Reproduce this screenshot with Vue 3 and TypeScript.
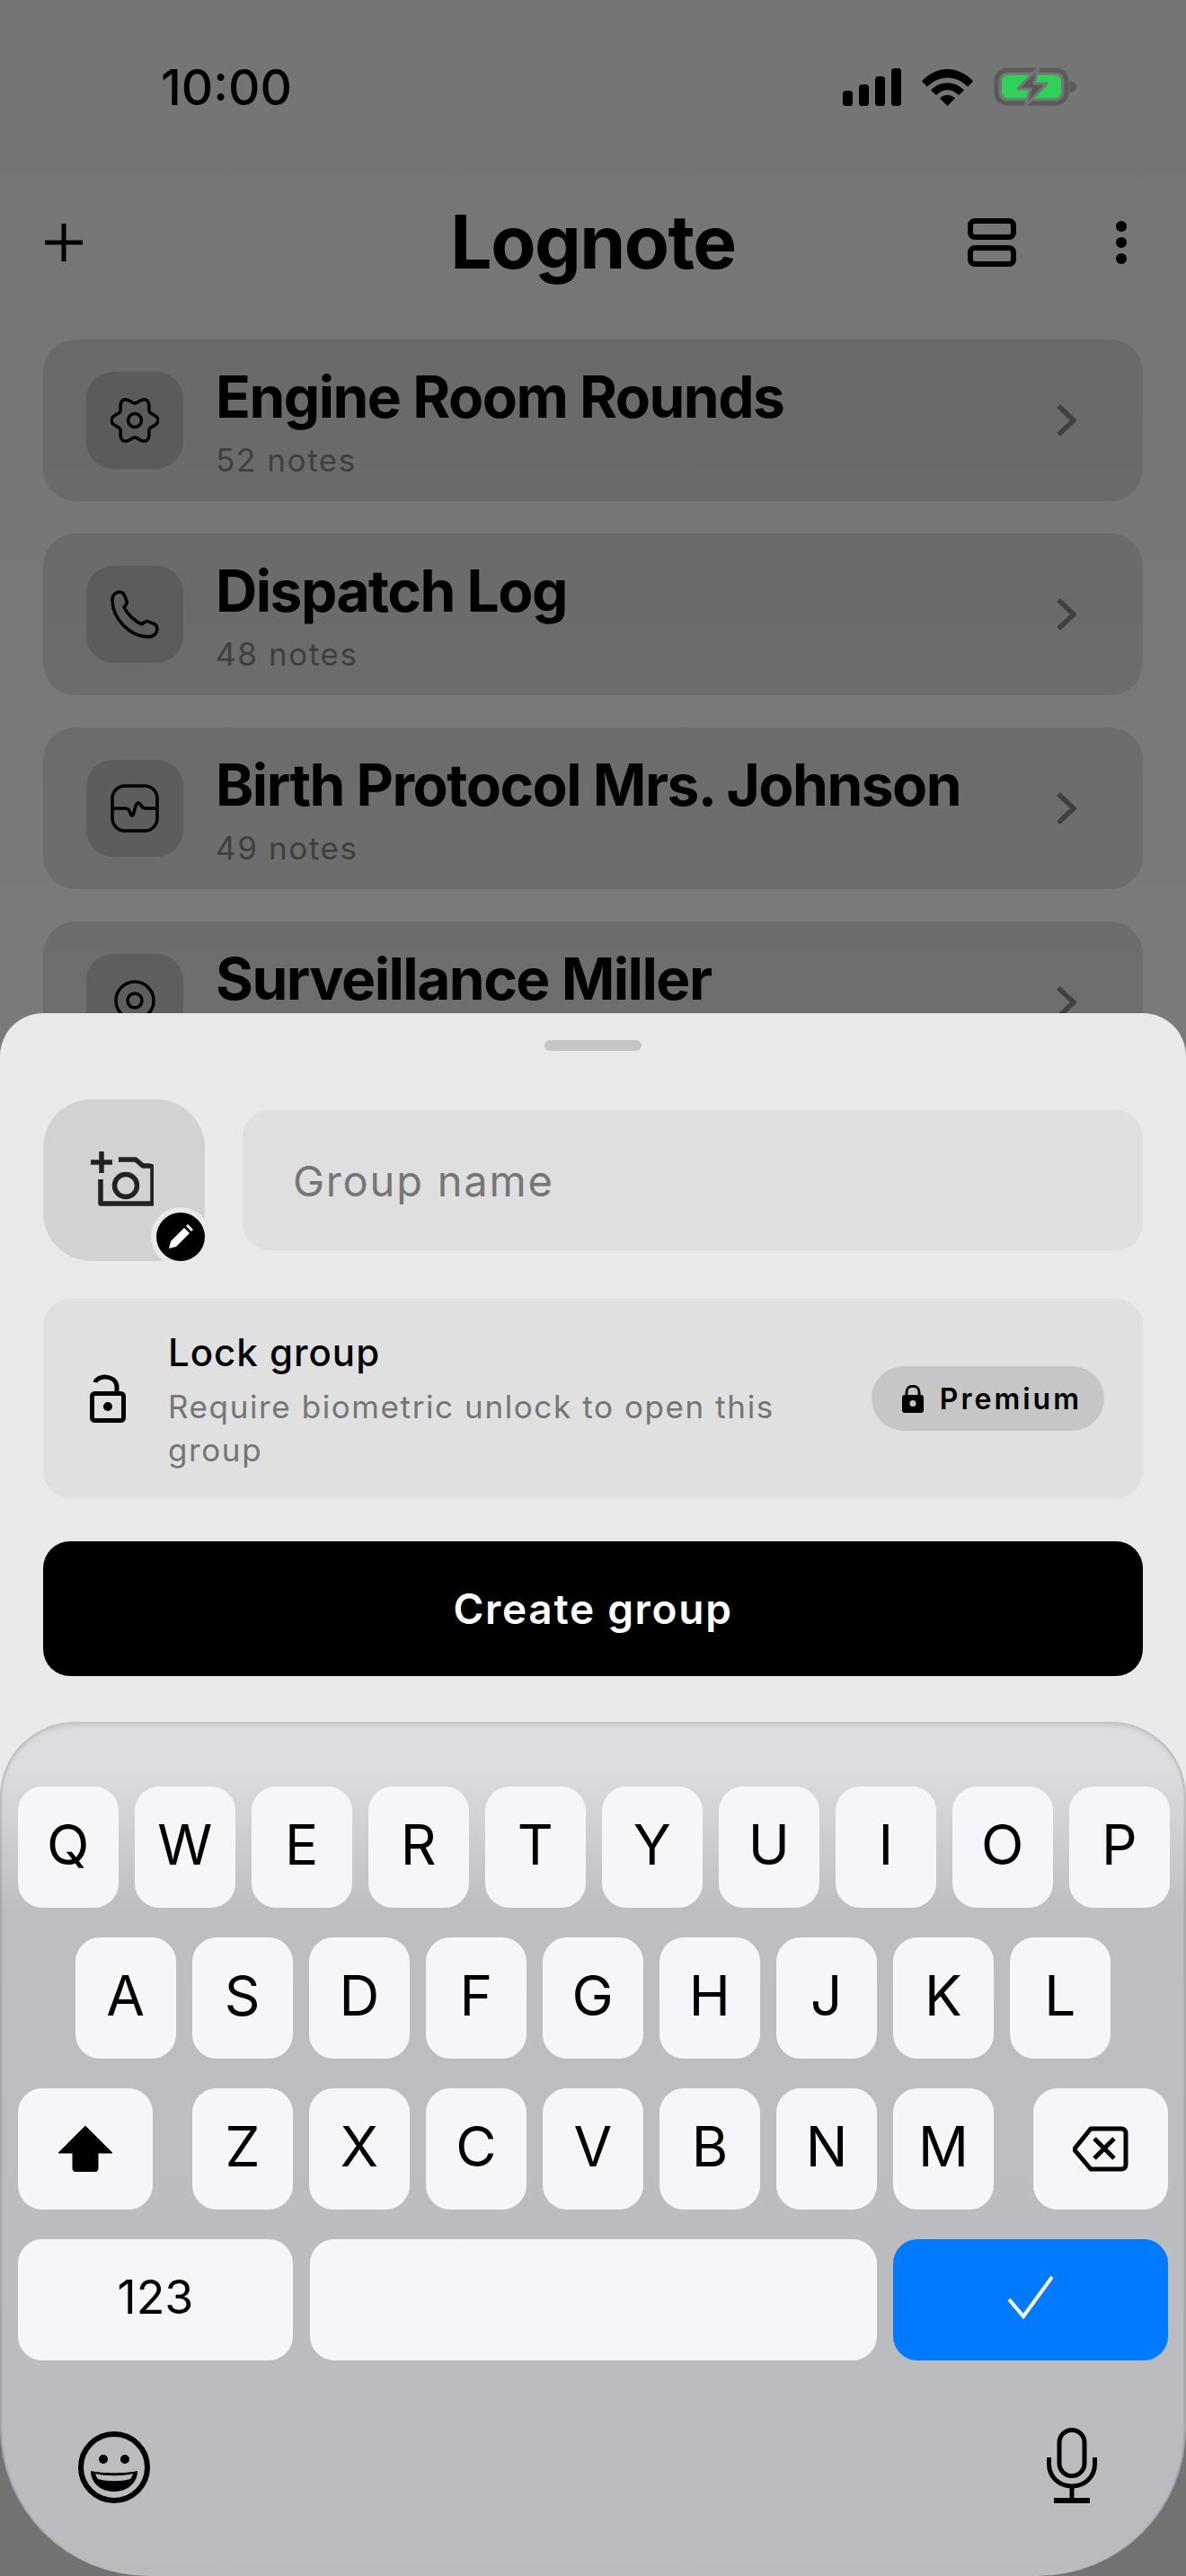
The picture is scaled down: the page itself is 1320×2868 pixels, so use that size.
<template>
  <div class="page">
    <div class="status">
      <span class="time">10:00</span>
      <div class="status-icons">
        <svg width="65" height="42" viewBox="0 0 65 42">
          <rect x="0" y="25" width="11" height="17" rx="3.5" />
          <rect x="18" y="18" width="11" height="24" rx="3.5" />
          <rect x="36" y="9" width="11" height="33" rx="3.5" />
          <rect x="54" y="0" width="11" height="42" rx="3.5" />
        </svg>
        <svg width="57" height="42" viewBox="0 0 57 42">
          <path d="M0 14.5C16 -3.500 41 -3.500 57 14.500L51 20.500C38 7 19 7 6 20.500Z" />
          <path d="M10 24.500C20 13.500 37 13.500 47 24.500L41 30C33 22 24 22 16 30Z" />
          <path d="M20 33.500C25 28.500 32 28.500 37 33.500L28.500 42Z" />
        </svg>
        <svg width="92" height="43" viewBox="0 0 92 43">
          <rect x="3" y="3" width="78" height="37" rx="12" fill="none" stroke="#5a5a5a" stroke-width="5" />
          <rect x="9" y="8.500" width="66" height="26" rx="7" fill="#30d158" />
          <path d="M84.500 15C89 16 92 18 92 21.500C92 25 89 27 84.500 28Z" fill="#5a5a5a" />
          <path d="M50 0L27 24H41L35 43L59 18H45Z" fill="#5a5a5a" stroke="#757575" stroke-width="3" stroke-linejoin="round" />
        </svg>
      </div>
    </div>

    <header class="header">
      <svg class="plus" width="42" height="42" viewBox="0 0 42 42">
        <path d="M21 0V42M0 21H42" fill="none" stroke="#000" stroke-width="5" />
      </svg>
      <h1 class="title">Lognote</h1>
      <div class="header-actions">
        <svg width="54" height="54" viewBox="0 0 54 54" fill="none" stroke="#000" stroke-width="6">
          <rect x="3" y="3" width="48" height="18" rx="5" />
          <rect x="3" y="33" width="48" height="18" rx="5" />
        </svg>
        <svg width="12" height="48" viewBox="0 0 12 48">
          <circle cx="6" cy="6" r="6" />
          <circle cx="6" cy="24" r="6" />
          <circle cx="6" cy="42" r="6" />
        </svg>
      </div>
    </header>

    <div class="groups">
      <div v-for="group in groups" :key="group.name" class="group">
        <div class="group-icon">
          <svg width="54" height="54" viewBox="0 0 54 54" fill="none" stroke="#000" stroke-width="3.500" stroke-linejoin="round">
            <template v-if="group.icon === 'gear'">
              <path :d="gearPath" />
              <circle cx="27" cy="27" r="7.500" />
            </template>
            <path
              v-else-if="group.icon === 'phone'"
              d="M2 11C2 5 6 2 10 2C13 2 15 4 16 7L18 12C19 15 17 17 15 19C19 27 27 35 35 38C37 36 39 34 42 35L47 37C50 38 52 40 52 43C52 48 48 52 42 52C21 52 2 31 2 11Z"
            />
            <template v-else-if="group.icon === 'pulse'">
              <rect x="2" y="2" width="50" height="50" rx="14" />
              <path d="M2 27H17C20 27 21 29 22 32C23 36 25 36 26 32C27 28 28 21 31 21C34 21 34 27 39 27H52" />
            </template>
            <template v-else>
              <circle cx="27" cy="25" r="21" />
              <circle cx="27" cy="25" r="8" />
            </template>
          </svg>
        </div>
        <div class="group-text">
          <div class="group-name">{{ group.name }}</div>
          <div v-if="group.notes" class="group-notes">{{ group.notes }} notes</div>
        </div>
        <svg class="chevron" width="23" height="36" viewBox="0 0 23 36">
          <path d="M3 2L20 18L3 34" fill="none" stroke="#808080" stroke-width="5.500" />
        </svg>
      </div>
    </div>

    <div class="scrim" />

    <div class="sheet">
      <div class="panel">
        <div class="handle" />
        <div class="name-row">
          <div class="avatar">
            <svg width="72" height="66" viewBox="0 0 72 66" fill="none" stroke="#222" stroke-width="5.500">
              <path d="M2 14H26M14 2V26" />
              <path d="M13 33V60H71V22C71 19 70 18 67 18H60L52 11H33" stroke-linejoin="round" />
              <circle cx="41" cy="40" r="12.500" />
            </svg>
            <div class="badge">
              <svg width="28" height="28" viewBox="0 0 28 28">
                <path d="M1 27L3 19L18 4L24 10L9 25Z" fill="#fff" />
                <path d="M20 2L22 0L28 6L26 8Z" fill="#fff" />
              </svg>
            </div>
          </div>
          <div class="name-input">Group name</div>
        </div>

        <div class="lock-card">
          <svg class="lock-open" width="40" height="54" viewBox="0 0 40 54" fill="none" stroke="#000" stroke-width="5">
            <path d="M6 9C8 1 28 0 30 13V20" />
            <rect x="2.500" y="21.500" width="35" height="30" rx="3" />
            <circle cx="20" cy="36" r="5" fill="#000" stroke="none" />
          </svg>
          <div class="lock-text">
            <div class="lock-title">Lock group</div>
            <div class="lock-sub">Require biometric unlock to open this group</div>
          </div>
          <div class="premium">
            <svg width="24" height="31" viewBox="0 0 24 31">
              <path d="M5 12V8C5 -1 19 -1 19 8V12" fill="none" stroke="#000" stroke-width="3" />
              <path fill-rule="evenodd" d="M3 11H21C23 11 24 12 24 14V28C24 30 23 31 21 31H3C1 31 0 30 0 28V14C0 12 1 11 3 11ZM12 17A3.500 3.500 0 1 0 12 24A3.500 3.500 0 1 0 12 17Z" />
            </svg>
            <span>Premium</span>
          </div>
        </div>

        <button class="create">Create group</button>
      </div>

      <div class="keyboard">
        <div class="kb-row">
          <div v-for="k in row1" :key="k" class="key">{{ k }}</div>
        </div>
        <div class="kb-row kb-row-2">
          <div v-for="k in row2" :key="k" class="key">{{ k }}</div>
        </div>
        <div class="kb-row kb-row-3">
          <div class="key key-side">
            <svg width="60" height="51" viewBox="0 0 60 51">
              <path d="M30 0L60 30H44V47C44 49 43 51 40 51H20C17 51 16 49 16 47V30H0Z" stroke="#000" stroke-width="1" stroke-linejoin="round" />
            </svg>
          </div>
          <div class="kb-letters">
            <div v-for="k in row3" :key="k" class="key">{{ k }}</div>
          </div>
          <div class="key key-side">
            <svg width="62" height="51" viewBox="0 0 62 51" fill="none" stroke="#000" stroke-width="5" stroke-linejoin="round">
              <path d="M20 3H54C57 3 59 5 59 8V43C59 46 57 48 54 48H20L3 28C2 27 2 25 3 24Z" />
              <path d="M24 14L46 36M46 14L24 36" />
            </svg>
          </div>
        </div>
        <div class="kb-row">
          <div class="key key-wide key-num">123</div>
          <div class="key key-space" />
          <div class="key key-wide key-return">
            <svg width="50" height="48" viewBox="0 0 50 48">
              <path d="M1 26L17 45L49 1" fill="none" stroke="#fff" stroke-width="4" />
            </svg>
          </div>
        </div>
        <div class="kb-bottom">
          <svg width="80" height="80" viewBox="0 0 80 80" fill="none" stroke="#000" stroke-width="6">
            <circle cx="40" cy="40" r="37" />
            <circle cx="28" cy="31" r="5" fill="#000" stroke="none" />
            <circle cx="52" cy="31" r="5" fill="#000" stroke="none" />
            <path d="M14 44C26 47 54 47 66 44C66 58 54 67 40 67C26 67 14 58 14 44Z" fill="#000" stroke="none" />
            <path d="M19 47C30 50 50 50 61 47C60 50 59 52 58 53C48 56 32 56 22 53C21 52 20 50 19 47Z" fill="#b9bbbf" stroke="none" />
          </svg>
          <svg width="56" height="84" viewBox="0 0 56 84" fill="none" stroke="#000" stroke-width="5">
            <rect x="14" y="2.500" width="28" height="51" rx="14" />
            <path d="M2.500 33V40C2.500 54 13 65 28 65C43 65 53.500 54 53.500 40V33" />
            <path d="M28 65V80" />
            <path d="M8 81H48" stroke-width="6" />
          </svg>
        </div>
      </div>
    </div>
  </div>
</template>

<script setup lang="ts">
type IconName = 'gear' | 'phone' | 'pulse' | 'target'

interface Group {
  name: string
  notes?: number
  icon: IconName
}

const groups: Group[] = [
  { name: 'Engine Room Rounds', notes: 52, icon: 'gear' },
  { name: 'Dispatch Log', notes: 48, icon: 'phone' },
  { name: 'Birth Protocol Mrs. Johnson', notes: 49, icon: 'pulse' },
  { name: 'Surveillance Miller', icon: 'target' },
]

const row1 = ['Q', 'W', 'E', 'R', 'T', 'Y', 'U', 'I', 'O', 'P']
const row2 = ['A', 'S', 'D', 'F', 'G', 'H', 'J', 'K', 'L']
const row3 = ['Z', 'X', 'C', 'V', 'B', 'N', 'M']

// wavy outline, six lobes
function makeGear() {
  const pts: string[] = []
  for (let i = 0; i < 120; i++) {
    const a = (i / 120) * Math.PI * 2
    const r = 22.5 + 3.5 * Math.cos(6 * a)
    pts.push(`${(27 + r * Math.cos(a)).toFixed(2)} ${(27 + r * Math.sin(a)).toFixed(2)}`)
  }
  return `M${pts.join('L')}Z`
}
const gearPath = makeGear()
</script>

<style>
html,
body {
  margin: 0;
  background: #757575;
}
</style>

<style scoped>
.page {
  position: relative;
  width: 1320px;
  height: 2868px;
  overflow: hidden;
  background: linear-gradient(#e9e9e9, #f5f5f5 1128px, #e6e6e6 2800px);
  font-family: Inter, 'Liberation Sans', sans-serif;
  color: #000;
}
.status {
  position: relative;
  z-index: 1;
  display: flex;
  justify-content: space-between;
  align-items: center;
  height: 43px;
  padding: 75px 122px 0 179px;
}
.time {
  padding-top: 2px;
  font-size: 55px;
  font-weight: 500;
  line-height: 43px;
}
.status-icons {
  display: flex;
  align-items: center;
  gap: 23px;
}
.header {
  display: grid;
  grid-template-columns: 1fr auto 1fr;
  align-items: center;
  height: 78px;
  margin-top: 113px;
  padding: 0 66px;
}
.plus {
  margin-left: -16px;
}
.title {
  margin: 0;
  font-size: 82px;
  font-weight: 700;
  line-height: 78px;
  letter-spacing: -1.500px;
}
.header-actions {
  display: flex;
  justify-content: flex-end;
  align-items: center;
  gap: 111px;
}
.groups {
  display: flex;
  flex-direction: column;
  gap: 36px;
  margin: 69px 48px 0;
}
.group {
  display: flex;
  align-items: center;
  height: 180px;
  padding: 0 74px 0 48px;
  border-radius: 36px;
  background: rgba(0, 0, 0, 0.1);
}
.group-icon {
  display: flex;
  align-items: center;
  justify-content: center;
  flex: none;
  width: 108px;
  height: 108px;
  border-radius: 30px;
  background: rgba(0, 0, 0, 0.14);
}
.group-text {
  flex: 1;
  box-sizing: border-box;
  height: 156px;
  margin-left: 36px;
  padding-top: 14px;
}
.group-name {
  font-size: 64px;
  font-weight: 700;
  line-height: 76px;
  letter-spacing: -1.500px;
}
.group-notes {
  margin-top: 10px;
  font-size: 35px;
  line-height: 44px;
  letter-spacing: 1.600px;
  color: #7e7e7e;
}
.scrim {
  position: absolute;
  inset: 0;
  background: rgba(0, 0, 0, 0.5);
}
.sheet {
  position: absolute;
  left: 0;
  right: 0;
  bottom: 0;
  display: flex;
  flex-direction: column;
}
.panel {
  display: flex;
  flex-direction: column;
  padding: 30px 48px 150px;
  border-radius: 48px 48px 0 0;
  background: #e9e9e9;
}
.handle {
  align-self: center;
  width: 108px;
  height: 12px;
  border-radius: 6px;
  background: #c5c5c5;
}
.name-row {
  display: flex;
  align-items: center;
  gap: 42px;
  margin-top: 54px;
}
.avatar {
  position: relative;
  display: flex;
  align-items: center;
  justify-content: center;
  flex: none;
  width: 180px;
  height: 180px;
  border-radius: 54px;
  background: #d2d2d2;
}
.avatar > svg {
  margin: -2px 0 0 -6px;
}
.badge {
  position: absolute;
  right: 0;
  bottom: 0;
  display: flex;
  align-items: center;
  justify-content: center;
  width: 54px;
  height: 54px;
  border-radius: 50%;
  background: #000;
  box-shadow: 0 0 0 6px #e9e9e9;
}
.name-input {
  flex: 1;
  height: 156px;
  padding-left: 56px;
  border-radius: 30px;
  background: #dfdfdf;
  font-size: 47px;
  line-height: 158px;
  letter-spacing: 1.800px;
  color: #767676;
}
.lock-card {
  display: flex;
  align-items: center;
  height: 222px;
  margin-top: 42px;
  padding: 0 43px 0 52px;
  border-radius: 30px;
  background: #e0e0e0;
}
.lock-open {
  flex: none;
}
.lock-text {
  flex: 1;
  margin: 6px 0 0 47px;
}
.lock-title {
  font-size: 42px;
  font-weight: 500;
  line-height: 48px;
  letter-spacing: 1px;
}
.lock-sub {
  width: 700px;
  margin-top: 12px;
  font-size: 35px;
  line-height: 48px;
  letter-spacing: 1.600px;
  color: #757575;
}
.premium {
  display: flex;
  align-items: center;
  gap: 18px;
  flex: none;
  height: 72px;
  padding: 0 25px 0 34px;
  border-radius: 36px;
  background: #c6c6c6;
  font-size: 32px;
  font-weight: 600;
  letter-spacing: 3px;
}
.create {
  height: 150px;
  margin-top: 48px;
  padding: 0;
  border: 0;
  border-radius: 30px;
  background: #000;
  color: #fff;
  font-family: inherit;
  font-size: 46px;
  font-weight: 600;
  letter-spacing: 1.700px;
}
.keyboard {
  display: flex;
  flex-direction: column;
  gap: 33px;
  height: 951px;
  box-sizing: border-box;
  margin-top: -99px;
  padding-top: 72px;
  border-radius: 84px 84px 165px 165px;
  background: linear-gradient(#dcdde0 0, #dcdde0 50px, #bcbec2 210px, #b9bbbf 100%);
  box-shadow: inset 0 5px 6px -2px rgba(0, 0, 0, 0.14), inset 3px 0 2px -1px rgba(0, 0, 0, 0.1), inset -3px 0 2px -1px rgba(0, 0, 0, 0.1);
}
.kb-row {
  display: flex;
  gap: 18.500px;
  padding: 0 20px;
}
.kb-row-2 {
  padding-left: 84px;
}
.kb-row-3 {
  justify-content: space-between;
}
.kb-letters {
  display: flex;
  gap: 18.500px;
}
.key {
  display: flex;
  align-items: center;
  justify-content: center;
  flex: none;
  box-sizing: border-box;
  width: 111.500px;
  height: 135px;
  padding-bottom: 5px;
  border-radius: 27px;
  background: #f4f6fa;
  font-size: 62px;
  line-height: 1;
}
.key-side {
  width: 150px;
  padding-bottom: 0;
}
.key-wide {
  width: 306px;
}
.key-space {
  flex: 1;
}
.key-num {
  font-size: 52px;
}
.key-return {
  background: #007aff;
}
.kb-bottom {
  display: flex;
  justify-content: space-between;
  align-items: flex-end;
  margin-top: 42px;
  padding: 0 99px 0 87px;
}
</style>
